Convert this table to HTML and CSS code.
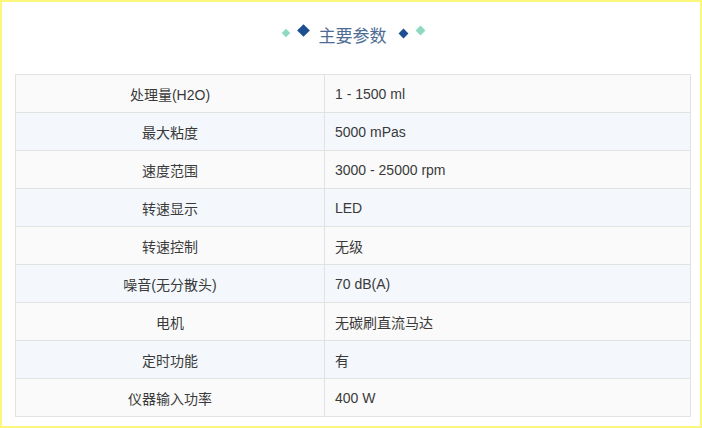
FILE: index.html
```html
<!DOCTYPE html>
<html lang="zh">
<head>
<meta charset="utf-8">
<link rel="stylesheet" href="styles.css">
</head>
<body>
<div class="frame">
  <div class="title">
    <span class="dia dia-sm light"></span>
    <span class="dia dia-lg dark up"></span>
    <span class="title-text">主要参数</span>
    <span class="dia dia-md dark"></span>
    <span class="dia dia-md light up"></span>
  </div>
  <table class="spec">
    <tr class="odd"><td class="k">处理量(H2O)</td><td class="v">1 - 1500 ml</td></tr>
    <tr class="even"><td class="k">最大粘度</td><td class="v">5000 mPas</td></tr>
    <tr class="odd"><td class="k">速度范围</td><td class="v">3000 - 25000 rpm</td></tr>
    <tr class="even"><td class="k">转速显示</td><td class="v">LED</td></tr>
    <tr class="odd"><td class="k">转速控制</td><td class="v">无级</td></tr>
    <tr class="even"><td class="k">噪音(无分散头)</td><td class="v">70 dB(A)</td></tr>
    <tr class="odd"><td class="k">电机</td><td class="v">无碳刷直流马达</td></tr>
    <tr class="even"><td class="k">定时功能</td><td class="v">有</td></tr>
    <tr class="odd"><td class="k">仪器输入功率</td><td class="v">400 W</td></tr>
  </table>
</div>
</body>
</html>
```

FILE: styles.css
```css
html, body {
  margin: 0;
  padding: 0;
  background: #fff;
}
.frame {
  box-sizing: border-box;
  width: 702px;
  height: 428px;
  border: 2px solid #fbf67c;
  padding: 0 11px 0 13px;
  font-family: "Liberation Sans", "Noto Sans CJK SC", sans-serif;
  color: #3a3a3a;
}
.title {
  height: 62px;
  margin-bottom: 10px;
  display: flex;
  align-items: center;
  justify-content: center;
  padding-left: 2px;
  box-sizing: border-box;
}
.title-text {
  font-family: "Noto Sans CJK SC", sans-serif;
  font-size: 17px;
  color: #4d6b93;
  margin: 0 8px 0 6px;
  position: relative;
  top: 1px;
}
.dia {
  display: inline-block;
  transform: rotate(45deg);
  margin: 0 5px;
}
.dia-sm { width: 6px; height: 6px; }
.dia-md { width: 7px; height: 7px; }
.dia-lg { width: 9px; height: 9px; }
.light { background: #8fd9c2; }
.dark { background: #1c4f8f; }
.up { position: relative; top: -3px; }
.spec {
  width: 676px;
  border-collapse: collapse;
  font-size: 14px;
}
.spec td {
  height: 37px;
  padding: 0 10px;
  border: 1px solid #e2e2e2;
}
.spec tr.odd td { background: #fafafa; }
.spec tr.even td { background: #f4f8fc; }
.spec td.k {
  width: 288px;
  text-align: center;
}
.spec td.v {
  text-align: left;
}
```
